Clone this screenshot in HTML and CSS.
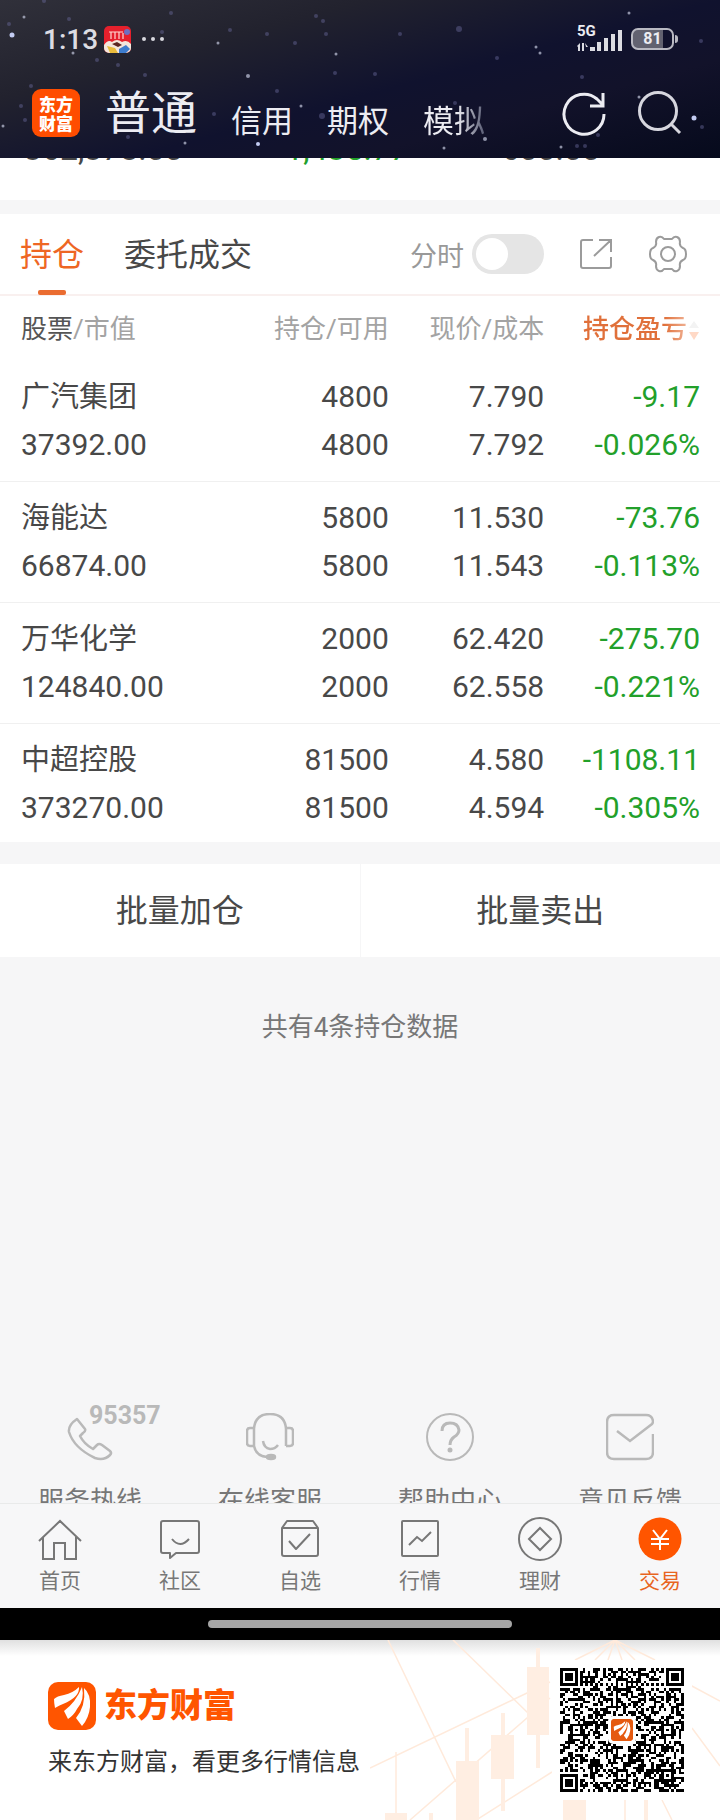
FILE: index.html
```html
<!DOCTYPE html>
<html lang="zh-CN">
<head>
<meta charset="utf-8">
<meta name="viewport" content="width=device-width, initial-scale=1">
<title>东方财富 - 持仓</title>
<link rel="stylesheet" href="styles.css">
</head>
<body>
<header class="top">
  <svg class="stars" viewBox="0 0 720 158" preserveAspectRatio="xMidYMid slice" aria-hidden="true">
    <g fill="#6a6a9c" opacity=".45">
      <circle cx="9" cy="24" r="2"/><circle cx="69" cy="19" r="2"/><circle cx="171" cy="13" r="2"/><circle cx="230" cy="30" r="2"/><circle cx="316" cy="16" r="2"/><circle cx="323" cy="21" r="2"/><circle cx="326" cy="34" r="2"/><circle cx="295" cy="43" r="2"/><circle cx="267" cy="34" r="2"/><circle cx="97" cy="60" r="2"/><circle cx="118" cy="65" r="2"/><circle cx="145" cy="75" r="2"/><circle cx="31" cy="86" r="2"/><circle cx="25" cy="120" r="2"/><circle cx="21" cy="106" r="2"/><circle cx="277" cy="91" r="2"/><circle cx="214" cy="114" r="2"/><circle cx="128" cy="137" r="2"/><circle cx="162" cy="32" r="2"/><circle cx="459" cy="29" r="3"/><circle cx="400" cy="34" r="2"/><circle cx="497" cy="58" r="2"/><circle cx="375" cy="74" r="2"/><circle cx="582" cy="77" r="2"/><circle cx="702" cy="127" r="2"/><circle cx="598" cy="135" r="2"/><circle cx="577" cy="146" r="2"/><circle cx="585" cy="146" r="2"/><circle cx="455" cy="103" r="2"/><circle cx="701" cy="41" r="2"/><circle cx="322" cy="116" r="3"/><circle cx="44" cy="1" r="2"/><circle cx="335" cy="73" r="2"/>
    </g>
    <g fill="#b9bdd2" opacity=".75">
      <circle cx="24" cy="17" r="1.5"/><circle cx="218" cy="43" r="1.5"/><circle cx="336" cy="54" r="1.5"/><circle cx="73" cy="53" r="1.5"/><circle cx="248" cy="76" r="2"/><circle cx="3" cy="126" r="1.5"/><circle cx="301" cy="106" r="1.5"/><circle cx="185" cy="143" r="1.5"/><circle cx="629" cy="13" r="1.5"/><circle cx="536" cy="47" r="1.5"/><circle cx="540" cy="53" r="1.5"/><circle cx="639" cy="97" r="1.5"/><circle cx="485" cy="139" r="2"/><circle cx="444" cy="148" r="1.5"/><circle cx="561" cy="147" r="1.5"/>
    </g>
    <g fill="#c3ccf2"><circle cx="12" cy="35" r="2.5"/><circle cx="258" cy="144" r="2"/><circle cx="694" cy="118" r="2.5"/></g>
  </svg>
  <div class="status">
    <span class="clock">1:13</span>
    <svg width="27" height="27" viewBox="0 0 27 27" aria-hidden="true">
      <rect width="27" height="27" rx="5" fill="#e5202c"/>
      <path d="M5 6h14M7 6v7M11 6v7M15 6v7M19 7v6" stroke="#ffd9d2" stroke-width="1.2" fill="none"/>
      <circle cx="23" cy="6" r="3" fill="#6d6fc0"/>
      <path d="M0 19q4-6 8-3 5-4 10 0 5-3 9 2v4a5 5 0 0 1-5 5H5a5 5 0 0 1-5-5z" fill="#f4e6dc"/>
      <path d="M8 18l5-2 5 3-4 2z" fill="#5a2622"/>
      <path d="M3 20l8 2 3 5H6z" fill="#e9bb3b"/><path d="M15 23l7-4 4 4-4 4h-7z" fill="#3e7dce"/>
    </svg>
    <svg width="22" height="6" viewBox="0 0 22 6" aria-hidden="true"><g fill="#d8d8de"><circle cx="2" cy="3" r="2"/><circle cx="11" cy="3" r="2"/><circle cx="20" cy="3" r="2"/></g></svg>
    <div class="signal">
      <span class="net">5G</span>
      <svg width="46" height="23" viewBox="0 0 46 23" aria-hidden="true"><g fill="#dcdce2"><path d="M0 17l3-3v8H1v-4zM5 14h2v8H5zM8 14l3 4H9zM13 18h5v4h-5zM20 13h4v9h-4zM27 9h4v13h-4zM34 5h4v17h-4zM41 1h4v21h-4z"/></g></svg>
    </div>
    <div class="battery"><span>81</span></div>
  </div>
  <div class="bar">
    <div class="app">东方<br>财富</div>
    <nav class="modes">
      <a class="on" href="#">普通</a><a href="#">信用</a><a href="#">期权</a><a class="fade" href="#">模拟</a>
    </nav>
    <button class="icon" aria-label="刷新"><svg width="46" height="46" viewBox="0 0 46 46" fill="none" stroke="#ececf2" stroke-width="3"><path d="M43 24A20 20 0 1 1 36 9l6 6M42 3v13H29"/></svg></button>
    <button class="icon" aria-label="搜索"><svg width="46" height="46" viewBox="0 0 46 46" fill="none" stroke="#d6d6de" stroke-width="3"><circle cx="21" cy="21" r="18.5"/><path d="M34 34l9 9"/></svg></button>
  </div>
</header>

<main>
  <div class="summary"><span>362,378.00</span><span class="down">-1,435.77</span><span>600.00</span></div>

  <section class="card">
    <div class="tabs">
      <button class="tab active">持仓</button>
      <button class="tab">委托成交</button>
      <label class="minute" for="minute">分时</label>
      <input class="switch" id="minute" type="checkbox">
      <button class="icon share" aria-label="分享"><svg width="34" height="34" viewBox="0 0 34 34" fill="none" stroke="#9b9b9b" stroke-width="2"><path d="M14 3H4a2 2 0 0 0-2 2v24a2 2 0 0 0 2 2h26a2 2 0 0 0 2-2V20M20 3h12v12M32 3L15 19"/></svg></button>
      <button class="icon" aria-label="设置"><svg width="38" height="38" viewBox="0 0 38 38" fill="none" stroke="#9b9b9b" stroke-width="2" stroke-linejoin="round"><path d="M10 2Q13 1 15 4H23Q25 1 28 2Q31 3 31 7Q30 11 34 13Q37 14 37 19Q37 24 34 25Q30 27 31 31Q31 35 28 36Q25 37 23 34H15Q13 37 10 36Q7 35 7 31Q8 27 4 25Q1 24 1 19Q1 14 4 13Q8 11 7 7Q7 3 10 2z"/><circle cx="19" cy="19" r="7"/></svg></button>
    </div>
    <table class="holdings">
      <thead><tr><th><b>股票</b>/市值</th><th>持仓/可用</th><th>现价/成本</th><th class="sort">持仓盈亏<svg width="12" height="22" viewBox="0 0 12 22" aria-hidden="true"><path d="M6 1l5 7H1z" fill="#f3f3f3"/><path d="M1 12h10l-5 8z" fill="#ffd9c6"/></svg></th></tr></thead>
      <tbody>
        <tr><td><span class="name">广汽集团</span><br>37392.00</td><td>4800<br>4800</td><td>7.790<br>7.792</td><td class="down">-9.17<br>-0.026%</td></tr>
        <tr><td><span class="name">海能达</span><br>66874.00</td><td>5800<br>5800</td><td>11.530<br>11.543</td><td class="down">-73.76<br>-0.113%</td></tr>
        <tr><td><span class="name">万华化学</span><br>124840.00</td><td>2000<br>2000</td><td>62.420<br>62.558</td><td class="down">-275.70<br>-0.221%</td></tr>
        <tr><td><span class="name">中超控股</span><br>373270.00</td><td>81500<br>81500</td><td>4.580<br>4.594</td><td class="down">-1108.11<br>-0.305%</td></tr>
      </tbody>
    </table>
  </section>

  <div class="batch"><button>批量加仓</button><button>批量卖出</button></div>
  <p class="total">共有4条持仓数据</p>

  <div class="help">
    <a href="#"><span class="phone"><svg width="48" height="48" viewBox="0 0 48 48" fill="none" stroke="#b9b9b9" stroke-width="2.5" stroke-linejoin="round"><path d="M11 6L19 16Q20 18 17 20L14 23Q18 31 27 36L31 32Q33 30 36 32L44 38Q46 40 44 42Q38 48 29 45Q8 35 3 19Q2 12 11 6z"/></svg><em>95357</em></span>服务热线</a>
    <a href="#"><svg width="48" height="48" viewBox="0 0 48 48" fill="none" stroke="#b9b9b9" stroke-width="2.5"><path d="M8 16v17q2 10 13 11M8 33V16Q9 1 24 1t16 15v17M8 15H4q-3 0-3 3v12q0 3 3 3h4M40 15h4q3 0 3 3v12q0 3-3 3h-4M17 28q1 7 7 8 5 0 8-4"/><ellipse cx="25" cy="44" rx="4" ry="2" fill="#b9b9b9"/></svg>在线客服</a>
    <a href="#"><svg width="48" height="48" viewBox="0 0 48 48" fill="none" stroke="#b9b9b9" stroke-width="2"><circle cx="24" cy="24" r="23"/><path d="M16 18q0-8 8-8t9 7q0 4-5 7-4 3-4 8" stroke-width="3"/><circle cx="24" cy="37" r="1.5" fill="#b9b9b9"/></svg>帮助中心</a>
    <a href="#"><svg width="48" height="48" viewBox="0 0 48 48" fill="none" stroke="#b9b9b9" stroke-width="2.5"><path d="M11 18l13 10 22-17q1-1 1-3-1-6-7-6H8Q1 2 1 9v30q0 7 7 7h32q7 0 7-7V21"/></svg>意见反馈</a>
  </div>
</main>

<nav class="dock">
  <a href="#"><svg width="44" height="44" viewBox="0 0 44 44" fill="none" stroke="#777" stroke-width="2"><path d="M1 24L22 4l21 20M5 20v22h11V26h11v16h11V20"/></svg>首页</a>
  <a href="#"><svg width="44" height="44" viewBox="0 0 44 44" fill="none" stroke="#777" stroke-width="2" stroke-linejoin="round"><path d="M5 4h34q2 0 2 2v28q0 2-2 2H18l-6 5v-5H5q-2 0-2-2V6q0-2 2-2zM14 22q8 10 17 0"/></svg>社区</a>
  <a href="#"><svg width="44" height="44" viewBox="0 0 44 44" fill="none" stroke="#777" stroke-width="2" stroke-linejoin="round"><path d="M4 11v26q0 2 2 2h32q2 0 2-2V11zM4 11l5-7h26l5 7M11 24l7 8 14-15"/></svg>自选</a>
  <a href="#"><svg width="44" height="44" viewBox="0 0 44 44" fill="none" stroke="#777" stroke-width="2"><rect x="4" y="4" width="36" height="35" rx="1"/><path d="M11 28l8-8 5 4 9-9"/></svg>行情</a>
  <a href="#"><svg width="44" height="44" viewBox="0 0 44 44" fill="none" stroke="#777" stroke-width="2"><circle cx="22" cy="22" r="21"/><path d="M22 11l11 11-11 11-11-11z"/></svg>理财</a>
  <a class="current" href="#"><svg width="44" height="44" viewBox="0 0 44 44" fill="none" stroke="#fff" stroke-width="2"><circle cx="22" cy="22" r="21.5" fill="#ff5500" stroke="none"/><path d="M15 13l7 9 7-9M13 22h18M13 27h18M22 22v11"/></svg>交易</a>
</nav>
<div class="gesture"><i></i></div>

<footer class="promo">
  <svg class="candles" viewBox="0 0 350 180" preserveAspectRatio="xMaxYMin slice" aria-hidden="true">
    <g stroke="#ffeadb" stroke-width="1.5" fill="none"><path d="M18 0L86 142M83 0L158 73M0 128L180 42M40 180L180 58M100 184L182 132M26 112v62M205 20l40-20 40 20M225 20l20-20 20 20M238 20l7-20 7 20M320 45l30 16M322 88l28 38M255 160v20M292 160l10 20"/></g>
    <g fill="#ffeee2"><path d="M157 27h22v68h-22zM166 8h4v120h-4zM121 95h23v44h-23zM131 73h4v98h-4zM86 121h23v59H86zM95 88h4v36h-4zM193 160h23v20h-23zM274 160h4v20h-4zM15 173h22v7H15zM59 173h4v7h-4z"/></g>
  </svg>
  <div class="brand">
    <div class="brand-row">
      <svg width="48" height="48" viewBox="0 0 48 48" aria-hidden="true"><rect width="48" height="48" rx="10" fill="#ff5500"/><g id="wing" fill="#fff"><path d="M6 17Q9 14 16 13Q25 11 31 5Q32 15 15 22Q12 23 7 26Q6 21 6 17z"/><path d="M16 29Q28 20 34 5Q37 18 29 27Q26 33 20 37z"/><path d="M36 6Q43 12 42 25Q41 36 34 44L28 36Q38 24 36 6z"/></g></svg>
      <strong>东方财富</strong>
    </div>
    <p>来东方财富，看更多行情信息</p>
  </div>
  <div class="qr"><svg id="qr" viewBox="0 0 49 49" shape-rendering="crispEdges" role="img" aria-label="二维码"></svg>
    <svg class="qr-logo" viewBox="0 0 48 48" aria-hidden="true"><rect width="48" height="48" rx="6" fill="#e55a10"/><use href="#wing"/></svg></div>
</footer>
<script src="qr.js"></script>
</body>
</html>
```
FILE: styles.css
```css
* { box-sizing: border-box; }
body { margin: 0; background: #f6f6f7; color: #484848; font-family: Roboto, "Noto Sans CJK SC", sans-serif; }
a { color: inherit; text-decoration: none; }
button { border: 0; padding: 0; background: none; color: inherit; font: inherit; }
svg { display: block; flex: none; }
p { margin: 0; }
.down { color: #22a02a; }

.top { position: relative; height: 158px; overflow: hidden; color: #ececf2; background: linear-gradient(165deg, #30303a 0%, #22222e 28%, #10122e 55%, #12122a 72%, #060a1c 100%); }
.stars { position: absolute; inset: 0; width: 100%; height: 100%; }
.status { position: relative; display: flex; align-items: center; height: 78px; padding: 0 46px 0 43px; gap: 11px; }
.clock { width: 50px; font-size: 28px; font-weight: 500; white-space: nowrap; color: #dcdce2; }
.signal { position: relative; margin-left: auto; margin-right: -3px; }
.signal svg { margin-top: 2px; }
.net { position: absolute; left: 0; top: -3px; font-size: 15px; line-height: 15px; font-weight: 700; }
.battery { position: relative; width: 43px; height: 22px; border: 2px solid #b9b9c2; border-radius: 7px; display: flex; align-items: center; justify-content: center; background: linear-gradient(90deg, #626270 78%, transparent 78%); font-size: 16px; line-height: 16px; font-weight: 700; }
.battery::after { content: ""; position: absolute; right: -6px; top: 5px; width: 3px; height: 8px; border-radius: 0 3px 3px 0; background: #b9b9c2; }
.bar { position: relative; display: flex; align-items: center; height: 70px; padding: 0 37px 0 32px; gap: 30px; }
.app { width: 48px; height: 48px; border-radius: 9px; background: #ff4d00; color: #fff; font: 900 17px/19px "Noto Sans CJK SC", sans-serif; text-align: center; padding-top: 5px; }
.modes { display: flex; align-items: flex-end; flex: 1; gap: 34px; margin-left: -5px; font-size: 31px; line-height: 44px; }
.modes .on { font-size: 46px; line-height: 62px; }
.fade { background: linear-gradient(90deg, #ececf2 55%, #555870); background-clip: text; -webkit-background-clip: text; color: transparent; }

.summary { display: flex; height: 42px; overflow: hidden; background: #fff; padding: 0 120px 0 24px; justify-content: space-between; font-size: 32px; line-height: 32px; }
.summary span { margin-top: -25px; }

.card { margin-top: 14px; background: #fff; }
.tabs { display: flex; align-items: center; height: 82px; padding: 0 33px 0 20px; border-bottom: 2px solid #f9f0ef; }
.tab { position: relative; height: 82px; padding-bottom: 4px; font-size: 32px; margin-right: 40px; }
.tab.active { color: #ee6624; }
.tab.active::after { content: ""; position: absolute; left: 50%; bottom: 0; width: 28px; height: 5px; margin-left: -14px; border-radius: 2px; background: #ea6c30; }
.minute { margin-left: auto; font-size: 27px; color: #999; }
.switch { appearance: none; width: 72px; height: 40px; margin: 0 35px 0 8px; border-radius: 20px; background: #e5e5e5; padding: 4px; }
.switch::before { content: ""; display: block; width: 32px; height: 32px; border-radius: 50%; background: #fff; }
.share { margin-right: 36px; }

.holdings { width: 100%; table-layout: fixed; border-collapse: collapse; font-size: 30px; line-height: 48px; }
.holdings th { height: 65px; padding: 0; font-size: 26px; font-weight: 400; color: #a3a3a3; text-align: right; white-space: nowrap; }
.holdings th b { font-weight: 400; color: #555; }
.holdings td { padding: 12px 0; text-align: right; border-bottom: 1px solid #f0f0f0; }
.holdings tr > :first-child { width: 30%; padding-left: 21px; text-align: left; }
.holdings tr > :nth-child(2) { width: 24%; }
.holdings tr > :nth-child(3) { width: 22%; padding-right: 3px; }
.holdings tr > :last-child { padding-right: 20px; }
.holdings tbody tr:last-child td { border: 0; padding-bottom: 10px; }
.holdings .name { font-size: 29px; }
.holdings .sort { color: transparent; font-weight: 500; background: linear-gradient(90deg, #e0703a 68%, #fbe0d4 90%); background-clip: text; -webkit-background-clip: text; }
.sort svg { display: inline-block; vertical-align: -4px; margin-left: 1px; }

.batch { display: flex; margin-top: 22px; background: #fff; }
.batch button { flex: 1; height: 93px; padding-bottom: 6px; font-size: 32px; }
.batch button + button { border-left: 1px solid #f6f6f7; }
.total { padding-top: 51px; text-align: center; font-size: 26px; line-height: 38px; color: #777; }

.help { display: flex; height: 100px; margin-top: 357px; overflow: hidden; }
.help a { flex: 1; display: flex; flex-direction: column; align-items: center; gap: 22px; padding-top: 10px; font-size: 26px; line-height: 36px; color: #777; }
.phone { position: relative; }
.phone em { position: absolute; left: 23px; top: -11px; font: 700 25px/28px Roboto, sans-serif; color: #b9b9b9; }

.dock { display: flex; height: 105px; border-top: 1px solid #e9eaea; background: #f7f7f8; }
.dock a { flex: 1; display: flex; flex-direction: column; align-items: center; gap: 5px; padding-top: 13px; font-size: 21px; line-height: 30px; color: #777; }
.dock .current { color: #e8651f; }
.gesture { display: flex; align-items: center; justify-content: center; height: 32px; background: #000; }
.gesture i { width: 304px; height: 8px; border-radius: 4px; background: #a5a5a5; }

.promo { position: relative; display: flex; justify-content: space-between; height: 180px; padding: 20px 28px 20px 48px; background: linear-gradient(#e0e0e0, #fff 16px); overflow: hidden; }
.candles { position: absolute; right: 0; top: 0; width: 350px; height: 100%; }
.brand { position: relative; padding-top: 22px; }
.brand-row { display: flex; align-items: center; gap: 8px; height: 48px; }
.brand strong { font-size: 33px; line-height: 44px; font-weight: 900; color: #ff5500; }
.brand p { margin-top: 14px; font-size: 24px; line-height: 36px; color: #333; }
.qr { position: relative; width: 140px; height: 140px; padding: 8px; border-radius: 8px; background: #fff; }
.qr-logo { position: absolute; left: 56px; top: 56px; width: 28px; height: 28px; border: 3px solid #fff; border-radius: 5px; background: #fff; }
```
FILE: qr.js
```js
// Draws a 49-module QR code: finder, alignment and timing patterns plus data modules.
const N = 49;
let seed = 95357;
const rnd = () => (seed = (seed * 1103515245 + 12345) % 2147483648) / 2147483648;
const grid = Array.from({ length: N }, () => Array.from({ length: N }, () => rnd() < 0.5));

for (let i = 0; i < N; i++) {
  grid[6][i] = i % 2 === 0;
  grid[i][6] = i % 2 === 0;
}

function rings(cx, cy, radius, isDark) {
  for (let y = -radius; y <= radius; y++) {
    for (let x = -radius; x <= radius; x++) {
      const row = grid[cy + y];
      if (row && cx + x >= 0 && cx + x < N) row[cx + x] = isDark(Math.max(Math.abs(x), Math.abs(y)));
    }
  }
}
const finder = d => d !== 2 && d !== 4;
const align = d => d !== 1;
[[3, 3], [N - 4, 3], [3, N - 4]].forEach(([x, y]) => rings(x, y, 4, finder));
[[24, 6], [6, 24], [24, 24], [42, 24], [24, 42], [42, 42]].forEach(([x, y]) => rings(x, y, 2, align));

let d = "";
grid.forEach((row, y) => row.forEach((on, x) => { if (on) d += `M${x} ${y}h1v1h-1z`; }));
const path = document.createElementNS("http://www.w3.org/2000/svg", "path");
path.setAttribute("d", d);
document.getElementById("qr").append(path);
```
